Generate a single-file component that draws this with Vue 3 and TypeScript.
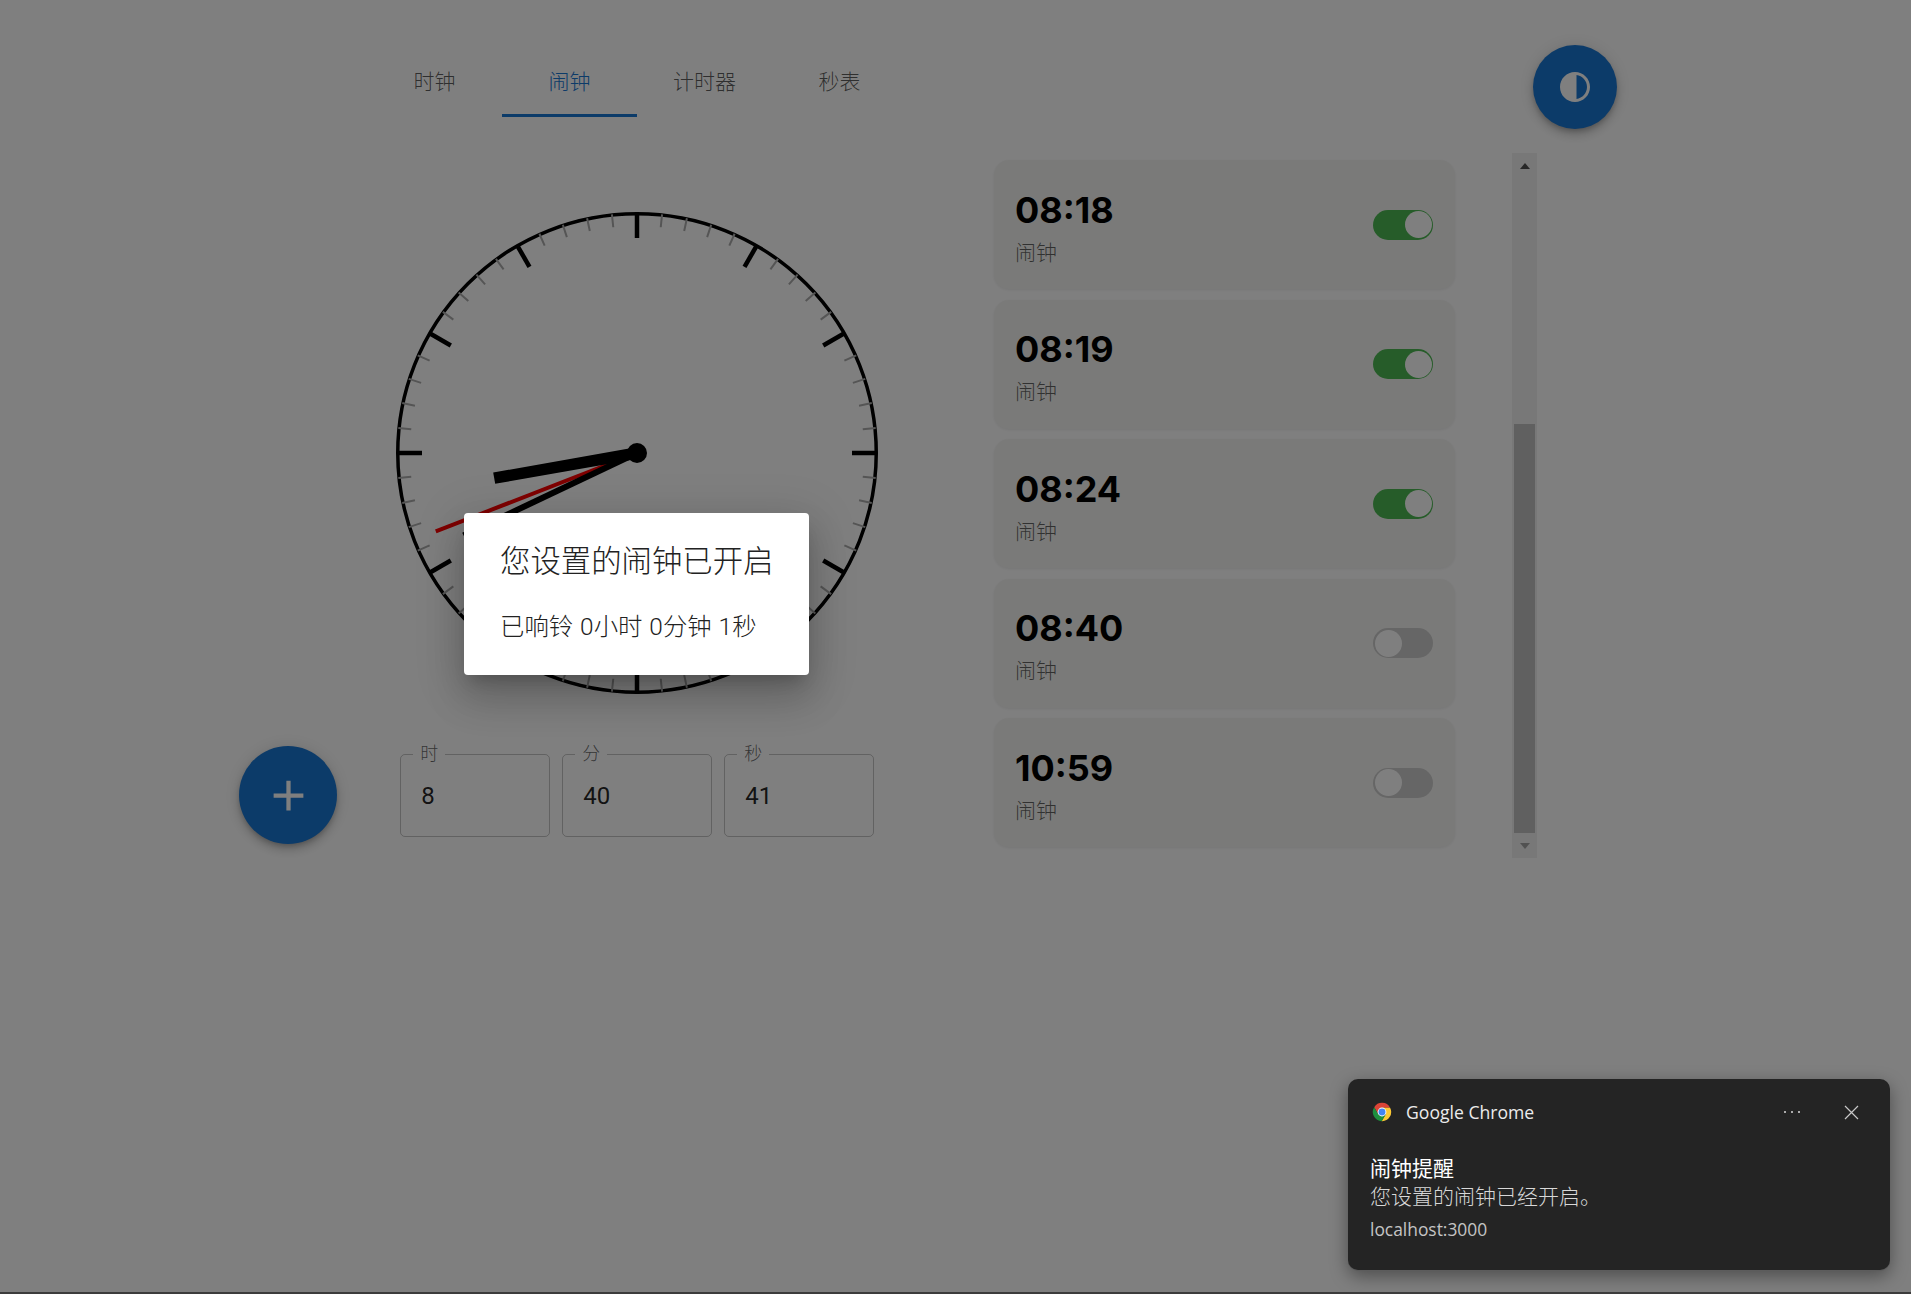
<template>
  <div class="page">
    <div class="add-col">
      <button class="fab fab--add" aria-label="add">
        <svg viewBox="0 0 24 24" width="51" height="51"><path d="M19 13h-6v6h-2v-6H5v-2h6V5h2v6h6v2z" /></svg>
      </button>
    </div>

    <div class="clock-col">
      <div class="tabs">
        <div v-for="(tab, i) in tabs" :key="tab" class="tab" :class="{ 'tab--active': i === 1 }">{{ tab }}</div>
      </div>

      <svg class="dial" viewBox="0 0 482 482" width="482" height="482">
        <circle cx="241" cy="241" r="239.25" fill="none" stroke="#000" stroke-width="3.5" />
        <line
          v-for="t in ticks"
          :key="t.angle"
          x1="241"
          y1="1"
          x2="241"
          :y2="t.major ? 26 : 14"
          :stroke="t.major ? '#000' : '#aaa'"
          :stroke-width="t.major ? 4.5 : 2"
          :transform="`rotate(${t.angle} 241 241)`"
        />
        <line x1="241" y1="241" x2="241" y2="25" stroke="#ff0000" stroke-width="4" transform="rotate(248.7 241 241)" />
        <line x1="241" y1="241" x2="241" y2="49" stroke="#000" stroke-width="6" transform="rotate(244.6 241 241)" />
        <line x1="241" y1="241" x2="241" y2="96" stroke="#000" stroke-width="11.5" transform="rotate(260 241 241)" />
        <circle cx="241" cy="241" r="10" fill="#000" />
      </svg>

      <div class="fields">
        <fieldset v-for="f in fields" :key="f.label" class="field">
          <legend>{{ f.label }}</legend>
          <span>{{ f.value }}</span>
        </fieldset>
      </div>
    </div>

    <div class="list">
      <div v-for="a in alarms" :key="a.time" class="card">
        <div class="card__text">
          <div class="card__time">{{ a.time }}</div>
          <div class="card__label">闹钟</div>
        </div>
        <div class="switch" :class="{ 'switch--on': a.on }"><i></i></div>
      </div>
    </div>

    <div class="scrollbar">
      <div class="scrollbar__btn"><b class="arrow arrow--up"></b></div>
      <div class="scrollbar__space"></div>
      <div class="scrollbar__thumb"></div>
      <div class="scrollbar__btn"><b class="arrow arrow--down"></b></div>
    </div>

    <button class="fab fab--theme" aria-label="theme">
      <svg viewBox="0 0 24 24" width="36" height="36">
        <path d="M12 22c5.52 0 10-4.48 10-10S17.52 2 12 2 2 6.48 2 12s4.48 10 10 10zm1-17.93c3.94.49 7 3.85 7 7.93s-3.05 7.44-7 7.93V4.07z" />
      </svg>
    </button>

    <div class="backdrop"></div>

    <div class="dialog">
      <div class="dialog__title">您设置的闹钟已开启</div>
      <div class="dialog__text">已响铃 0小时 0分钟 1秒</div>
    </div>

    <div class="toast">
      <div class="toast__head">
        <svg class="toast__logo" viewBox="0 0 48 48" width="22" height="22">
          <path d="M7.04 13.4A20 20 0 0 1 41.66 14.61L24 14.61L15.87 28.7Z" fill="#db4437" />
          <path d="M41.66 14.61A20 20 0 0 1 23.3 43.99L32.13 28.7L24 14.61Z" fill="#fcc934" />
          <path d="M23.3 43.99A20 20 0 0 1 7.04 13.4L15.87 28.7L32.13 28.7Z" fill="#1e8e3e" />
          <circle cx="24" cy="24" r="9.6" fill="#fff" />
          <circle cx="24" cy="24" r="7.6" fill="#4285f4" />
        </svg>
        <span class="toast__app">Google Chrome</span>
        <span class="toast__more"><i></i><i></i><i></i></span>
        <svg class="toast__close" viewBox="0 0 15 15" width="15" height="15">
          <path d="M1 1l13 13M14 1L1 14" stroke="#c8c8c8" stroke-width="1.2" fill="none" />
        </svg>
      </div>
      <div class="toast__title">闹钟提醒</div>
      <div class="toast__body">您设置的闹钟已经开启。</div>
      <div class="toast__source">localhost:3000</div>
    </div>

    <div class="screen-edge"></div>
  </div>
</template>

<script setup lang="ts">
interface Alarm {
  time: string
  on: boolean
}

const tabs = ['时钟', '闹钟', '计时器', '秒表']

const fields = [
  { label: '时', value: '8' },
  { label: '分', value: '40' },
  { label: '秒', value: '41' }
]

const alarms: Alarm[] = [
  { time: '08:18', on: true },
  { time: '08:19', on: true },
  { time: '08:24', on: true },
  { time: '08:40', on: false },
  { time: '10:59', on: false }
]

const ticks = Array.from({ length: 60 }, (_, i) => ({
  angle: i * 6,
  major: i % 5 === 0
}))
</script>

<style>
html,
body {
  margin: 0;
  overflow: hidden;
}
</style>

<style scoped>
.page {
  position: relative;
  display: flex;
  box-sizing: border-box;
  width: 1911px;
  height: 1294px;
  padding: 45px 0 0 239px;
  overflow: hidden;
  background: #fff;
  font-family: Roboto, "Noto Sans CJK SC", sans-serif;
  color: rgba(0, 0, 0, 0.87);
}

.fab {
  display: flex;
  align-items: center;
  justify-content: center;
  padding: 0;
  border: 0;
  border-radius: 50%;
  background: #1976d2;
  box-shadow: 0 3px 5px -1px rgba(0, 0, 0, 0.2), 0 6px 10px 0 rgba(0, 0, 0, 0.14), 0 1px 18px 0 rgba(0, 0, 0, 0.12);
}

.fab svg {
  fill: #fff;
}

.add-col {
  width: 128px;
  flex: none;
}

.fab--add {
  width: 98px;
  height: 98px;
  margin-top: 701px;
}

.fab--theme {
  position: absolute;
  top: 45px;
  left: 1533px;
  width: 84px;
  height: 84px;
}

.clock-col {
  display: flex;
  flex-direction: column;
  align-items: center;
  width: 540px;
  flex: none;
}

.tabs {
  display: flex;
  align-self: stretch;
  height: 72px;
}

.tab {
  display: flex;
  align-items: center;
  justify-content: center;
  box-sizing: border-box;
  width: 135px;
  padding-bottom: 3px;
  font-size: 21px;
  font-weight: 300;
  color: rgba(0, 0, 0, 0.65);
}

.tab--active {
  color: #1976d2;
  border-bottom: 3px solid #1976d2;
  padding-bottom: 0;
}

.dial {
  margin-top: 95px;
  flex: none;
}

.fields {
  display: flex;
  gap: 12.5px;
  margin-top: 52px;
}

.field {
  display: block;
  box-sizing: border-box;
  width: 149.5px;
  height: 91px;
  margin: 0;
  padding: 0 20px;
  border: 1px solid rgba(0, 0, 0, 0.23);
  border-radius: 5px;
  font-size: 24px;
}

.field legend {
  margin-left: -8px;
  padding: 0 7px;
  font-size: 18px;
  font-weight: 300;
  line-height: 16px;
  color: rgba(0, 0, 0, 0.6);
}

.field span {
  display: block;
  line-height: 68px;
}

.list {
  display: flex;
  flex-direction: column;
  gap: 10.5px;
  width: 461px;
  flex: none;
  margin: 115px 0 0 87px;
}

.card {
  display: flex;
  align-items: center;
  justify-content: space-between;
  box-sizing: border-box;
  height: 129px;
  padding: 0 22px 0 21px;
  border-radius: 15px;
  background: #f5f5f3;
  box-shadow: 0 1px 3px rgba(0, 0, 0, 0.08);
}

.card__text {
  padding-top: 6px;
}

.card__time {
  font-family: Inter, sans-serif;
  font-size: 36px;
  font-weight: 700;
  line-height: 44px;
  color: #000;
}

.card__label {
  margin-top: 6px;
  font-size: 21px;
  font-weight: 300;
  line-height: 30px;
  color: rgba(0, 0, 0, 0.6);
}

.switch {
  display: flex;
  box-sizing: border-box;
  width: 60px;
  height: 30px;
  padding: 1.5px;
  border-radius: 15px;
  background: #ccc;
}

.switch i {
  width: 27px;
  height: 27px;
  border-radius: 50%;
  background: #fff;
}

.switch--on {
  justify-content: flex-end;
  background: #4cb852;
}

.scrollbar {
  display: flex;
  flex-direction: column;
  align-items: center;
  width: 25px;
  height: 705px;
  flex: none;
  margin: 108px 0 0 57px;
  background: #f1f1f1;
}

.scrollbar__btn {
  display: flex;
  align-items: center;
  justify-content: center;
  height: 25px;
  flex: none;
}

.scrollbar__space {
  height: 246px;
  flex: none;
}

.scrollbar__thumb {
  width: 21px;
  flex: 1;
  background: #c1c1c1;
}

.arrow {
  width: 0;
  height: 0;
  border-left: 5.5px solid transparent;
  border-right: 5.5px solid transparent;
}

.arrow--up {
  border-bottom: 6px solid #505050;
}

.arrow--down {
  border-top: 6px solid #a3a3a3;
}

.backdrop {
  position: absolute;
  inset: 0;
  background: rgba(0, 0, 0, 0.5);
}

.dialog {
  position: absolute;
  top: 513px;
  left: 464px;
  box-sizing: border-box;
  width: 345px;
  height: 162px;
  padding: 30px 36px;
  border-radius: 4px;
  background: #fff;
  color: #222;
  font-weight: 300;
  white-space: nowrap;
  box-shadow: 0 11px 15px -7px rgba(0, 0, 0, 0.2), 0 24px 38px 3px rgba(0, 0, 0, 0.14), 0 9px 46px 8px rgba(0, 0, 0, 0.12);
}

.dialog__title {
  font-size: 30.4px;
  line-height: 38px;
}

.dialog__text {
  margin-top: 29px;
  font-size: 24.4px;
  line-height: 34px;
  word-spacing: 1px;
}

.toast {
  position: absolute;
  top: 1079px;
  left: 1348px;
  box-sizing: border-box;
  width: 542px;
  height: 191px;
  padding: 0 22px;
  border-radius: 10px;
  background: #242424;
  color: #d8d8d8;
  font-family: "Open Sans", "Noto Sans CJK SC", sans-serif;
  box-shadow: 0 1px 0 #5c5c5c, 0 6px 18px rgba(0, 0, 0, 0.4);
}

.toast__head {
  display: flex;
  align-items: center;
  height: 66px;
}

.toast__logo {
  margin-left: 1px;
}

.toast__app {
  flex: 1;
  margin-left: 13px;
  font-size: 17.6px;
  color: #ececec;
}

.toast__more {
  display: flex;
  gap: 5px;
  margin-right: 44px;
}

.toast__more i {
  width: 2px;
  height: 2px;
  border-radius: 50%;
  background: #d8d8d8;
}

.toast__close {
  margin-right: 9px;
}

.toast__title {
  margin-top: 10px;
  font-size: 21px;
  line-height: 26px;
  color: #fff;
}

.toast__body {
  font-size: 21px;
  font-weight: 300;
  line-height: 30px;
}

.toast__source {
  margin-top: 6px;
  font-size: 17.4px;
  line-height: 24px;
  color: #c4c4c4;
}

.screen-edge {
  position: absolute;
  left: 0;
  right: 0;
  bottom: 0;
  height: 2px;
  background: #3c3c3c;
}
</style>
